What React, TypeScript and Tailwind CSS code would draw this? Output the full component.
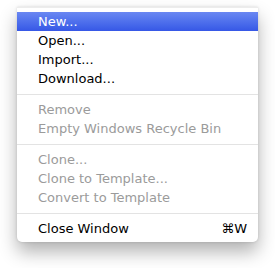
const groups: { label: string; disabled?: boolean; active?: boolean; shortcut?: string }[][] = [
  [
    { label: 'New...', active: true },
    { label: 'Open...' },
    { label: 'Import...' },
    { label: 'Download...' },
  ],
  [
    { label: 'Remove', disabled: true },
    { label: 'Empty Windows Recycle Bin', disabled: true },
  ],
  [
    { label: 'Clone...', disabled: true },
    { label: 'Clone to Template...', disabled: true },
    { label: 'Convert to Template', disabled: true },
  ],
  [{ label: 'Close Window', shortcut: '⌘W' }],
]

export default function App() {
  return (
    <div className="h-[268px] w-[275px] bg-white pl-[17px] pt-[7px] font-['DejaVu_Sans',sans-serif]">
      <div className="w-[241px] rounded-b-[5px] border-t border-[#ececec] bg-white py-[4px] shadow-[0_10px_18px_rgba(0,0,0,0.3),0_0_3px_rgba(0,0,0,0.14)]">
        {groups.map((group, gi) => (
          <div key={gi}>
            {gi > 0 && (
              <div className="flex h-[12px] items-center">
                <div className="h-px w-full bg-[#e3e3e3]" />
              </div>
            )}
            {group.map((item) => (
              <div
                key={item.label}
                className={
                  'flex h-[19px] items-center justify-between pl-[21px] pr-[11px] text-[13px] leading-none ' +
                  (item.active
                    ? 'bg-gradient-to-b from-[#6a87f2] to-[#3657e6] text-white'
                    : item.disabled
                      ? 'text-[#9b9b9b]'
                      : 'text-black')
                }
              >
                <span>{item.label}</span>
                {item.shortcut && <span>{item.shortcut}</span>}
              </div>
            ))}
          </div>
        ))}
      </div>
    </div>
  )
}
